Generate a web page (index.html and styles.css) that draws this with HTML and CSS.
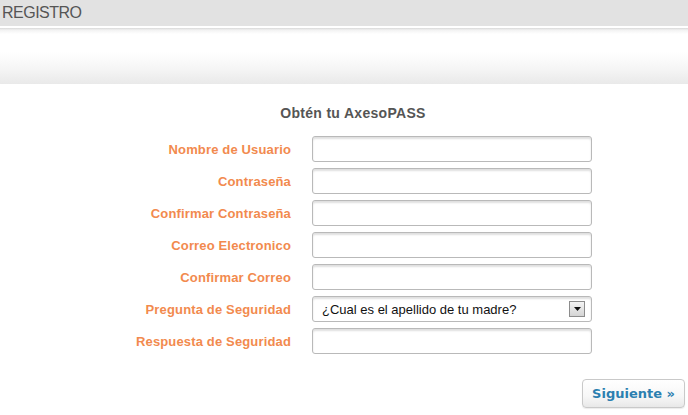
FILE: index.html
```html
<!DOCTYPE html>
<html lang="es">
<head>
<meta charset="utf-8">
<title>Registro</title>
<link rel="stylesheet" href="styles.css">
</head>
<body>
<header class="topbar">
  <h1 class="topbar-title">REGISTRO</h1>
</header>
<div class="band"></div>
<main class="content">
  <h2 class="form-title">Obtén tu AxesoPASS</h2>
  <form class="form">
    <label class="label" for="u">Nombre de Usuario</label>
    <input class="field" id="u" type="text">
    <label class="label" for="p">Contraseña</label>
    <input class="field" id="p" type="password">
    <label class="label" for="p2">Confirmar Contraseña</label>
    <input class="field" id="p2" type="password">
    <label class="label" for="e">Correo Electronico</label>
    <input class="field" id="e" type="text">
    <label class="label" for="e2">Confirmar Correo</label>
    <input class="field" id="e2" type="text">
    <label class="label" for="q">Pregunta de Seguridad</label>
    <div class="field select" id="q">
      <span class="select-text">¿Cual es el apellido de tu madre?</span>
      <span class="select-btn"><svg width="7" height="4" viewBox="0 0 7 4"><path d="M0 0H7L3.5 4Z" fill="#111"/></svg></span>
    </div>
    <label class="label" for="r">Respuesta de Seguridad</label>
    <input class="field" id="r" type="text">
  </form>
  <div class="actions">
    <button class="next" type="button">Siguiente »</button>
  </div>
</main>
</body>
</html>
```
FILE: styles.css
```css
* { box-sizing: border-box; }
html, body { margin: 0; padding: 0; background: #fff; }
body { width: 688px; height: 415px; overflow: hidden; font-family: "Liberation Sans", Arial, sans-serif; }

.topbar {
  height: 26px;
  background: #e2e2e2;
  display: flex;
  align-items: center;
  padding-left: 2px;
}
.topbar-title {
  margin: 0;
  font-size: 16px;
  font-weight: normal;
  letter-spacing: -0.5px;
  color: #555;
  line-height: 26px;
}
.band {
  height: 58px;
  border-top: 2px solid #fff;
  background: linear-gradient(to bottom, #d8d8d8 0px, #f2f2f2 2px, #fff 6px, #fff 24px, #f6f6f6 40px, #e9e9e9 56px);
}
.content { padding-top: 21px; }
.form-title {
  margin: 0 0 14px 0;
  padding-left: 18px;
  text-align: center;
  font-size: 14px;
  font-weight: bold;
  letter-spacing: 0.3px;
  color: #555;
  line-height: 17px;
}
.form {
  display: grid;
  grid-template-columns: 291px 280px;
  column-gap: 21px;
  row-gap: 6px;
  align-items: center;
}
.label {
  text-align: right;
  font-size: 13px;
  font-weight: bold;
  letter-spacing: 0.15px;
  color: #f28a4e;
}
.field {
  height: 26px;
  width: 280px;
  border: 1px solid #b9b9b9;
  border-radius: 3px;
  background: #fff;
  box-shadow: inset 0 2px 2px rgba(0,0,0,0.13);
  margin: 0;
  padding: 0 8px;
  font: 13px "Liberation Sans", Arial, sans-serif;
}
.select {
  display: flex;
  align-items: center;
  justify-content: space-between;
  padding: 0 6px 0 9px;
}
.select-text { color: #111; font-size: 13px; }
.select-btn {
  width: 16px;
  height: 16px;
  border: 1px solid #8c8c8c;
  background: linear-gradient(to bottom, #f4f4f4, #d4d4d4);
  display: flex;
  align-items: center;
  justify-content: center;
}
.actions {
  display: flex;
  justify-content: flex-end;
  padding: 25px 3px 0 0;
}
.next {
  width: 103px;
  height: 29px;
  border: 1px solid #c9c9c9;
  border-radius: 4px;
  background: linear-gradient(to bottom, #fff 0%, #f7f7f7 60%, #e8e8e8 100%);
  box-shadow: 0 1px 1px rgba(0,0,0,0.08);
  font-family: "DejaVu Sans", Verdana, sans-serif;
  font-size: 13px;
  font-weight: bold;
  color: #2b7fb0;
  padding: 0;
}
```
